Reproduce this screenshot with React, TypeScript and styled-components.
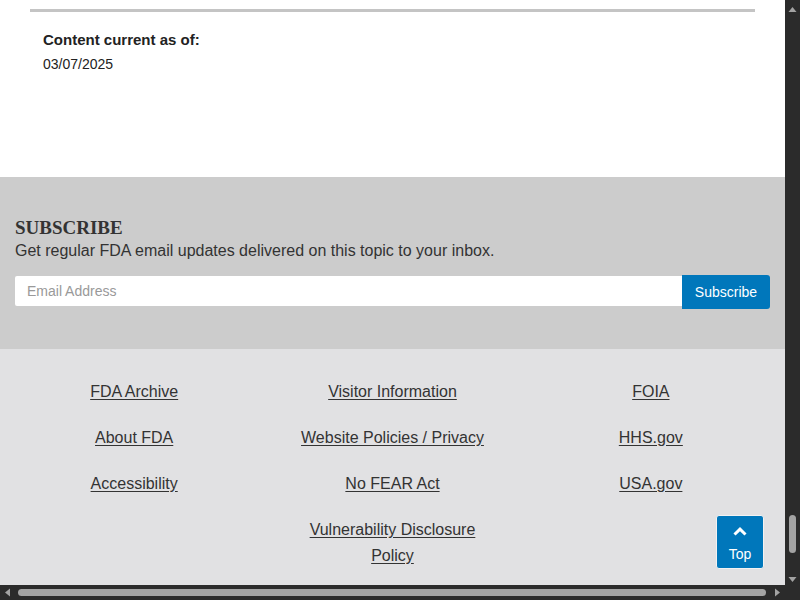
import React from "react";
import styled, { createGlobalStyle } from "styled-components";

const Global = createGlobalStyle`
  html, body { margin: 0; padding: 0; background: #ffffff; }
  body { font-family: "Liberation Sans", Arial, sans-serif; color: #333333; overflow: hidden; }
  * { box-sizing: border-box; }
`;

const Page = styled.div`
  width: 785px;
  height: 585px;
  overflow: hidden;
  display: flex;
  flex-direction: column;
`;

const Meta = styled.section`
  background: #ffffff;
  height: 177px;
  flex-shrink: 0;
  padding: 9px 30px 0 30px;
`;

const Rule = styled.div`
  height: 3px;
  background: #c4c4c4;
`;

const MetaBody = styled.div`
  padding: 18px 0 0 13px;
  display: flex;
  flex-direction: column;
  gap: 4px;
`;

const MetaLabel = styled.div`
  font-size: 15px;
  line-height: 20px;
  font-weight: 700;
  color: #222222;
`;

const MetaValue = styled.div`
  font-size: 14px;
  line-height: 20px;
  color: #222222;
`;

const Subscribe = styled.section`
  background: #cccccc;
  flex-shrink: 0;
  padding: 39px 15px 40px 15px;
`;

const SubTitle = styled.h2`
  margin: 0;
  font-family: "Liberation Serif", "Times New Roman", serif;
  font-weight: 700;
  font-size: 19px;
  line-height: 24px;
  color: #333333;
`;

const SubText = styled.p`
  margin: 0;
  font-size: 16px;
  line-height: 22px;
  color: #333333;
`;

const Form = styled.form`
  margin-top: 13px;
  display: flex;
  align-items: flex-start;
`;

const Email = styled.input`
  flex: 1;
  height: 30px;
  margin-top: 1px;
  border: none;
  border-radius: 2px 0 0 2px;
  background: #ffffff;
  padding: 0 12px;
  font-family: "Liberation Sans", Arial, sans-serif;
  font-size: 14px;
  color: #333;
  outline: none;
  &::placeholder { color: #999999; }
`;

const SubButton = styled.button`
  width: 88px;
  height: 34px;
  border: none;
  border-radius: 0 3px 3px 0;
  background: #0077bb;
  color: #ffffff;
  font-family: "Liberation Sans", Arial, sans-serif;
  font-size: 14px;
  padding: 0;
  cursor: pointer;
`;

const Footer = styled.footer`
  flex: 1;
  background: #e1e1e3;
  padding: 30px 5px 0 5px;
  display: grid;
  grid-template-columns: repeat(3, 1fr);
  row-gap: 20px;
  align-content: start;
`;

const Cell = styled.div`
  display: flex;
  justify-content: center;
  text-align: center;
`;

const FootLink = styled.a`
  display: block;
  max-width: 200px;
  font-size: 16px;
  line-height: 26px;
  color: #333333;
  text-decoration: underline;
  text-underline-offset: 2px;
`;

const TopButton = styled.a`
  position: fixed;
  left: 716px;
  top: 515px;
  width: 48px;
  height: 54px;
  background: #0077bb;
  border: 1px solid #f2f2f2;
  border-radius: 3px;
  color: #ffffff;
  display: flex;
  flex-direction: column;
  align-items: center;
  padding-top: 11px;
  gap: 10px;
  text-decoration: none;
  font-size: 14px;
  line-height: 16px;
`;

const VScroll = styled.div`
  position: fixed;
  left: 785px;
  top: 0;
  width: 15px;
  height: 600px;
  background: #2b2b2b;
`;

const HScroll = styled.div`
  position: fixed;
  left: 0;
  top: 585px;
  width: 785px;
  height: 15px;
  background: #2b2b2b;
`;

const Thumb = styled.div<{ $x: number; $y: number; $w: number; $h: number }>`
  position: absolute;
  left: ${(p) => p.$x}px;
  top: ${(p) => p.$y}px;
  width: ${(p) => p.$w}px;
  height: ${(p) => p.$h}px;
  background: #a3a3a3;
  border-radius: 4px;
`;

const Arrow = styled.svg<{ $x: number; $y: number }>`
  position: absolute;
  left: ${(p) => p.$x}px;
  top: ${(p) => p.$y}px;
  width: 15px;
  height: 15px;
`;

const links: string[][] = [
  ["FDA Archive", "Visitor Information", "FOIA"],
  ["About FDA", "Website Policies / Privacy", "HHS.gov"],
  ["Accessibility", "No FEAR Act", "USA.gov"],
  ["", "Vulnerability Disclosure Policy", ""],
];

export default function App() {
  return (
    <>
      <Global />
      <Page>
        <Meta>
          <Rule />
          <MetaBody>
            <MetaLabel>Content current as of:</MetaLabel>
            <MetaValue>03/07/2025</MetaValue>
          </MetaBody>
        </Meta>
        <Subscribe>
          <SubTitle>SUBSCRIBE</SubTitle>
          <SubText>Get regular FDA email updates delivered on this topic to your inbox.</SubText>
          <Form onSubmit={(e) => e.preventDefault()}>
            <Email type="email" placeholder="Email Address" />
            <SubButton type="submit">Subscribe</SubButton>
          </Form>
        </Subscribe>
        <Footer>
          {links.flat().map((t, i) => (
            <Cell key={i}>{t && <FootLink href="#">{t}</FootLink>}</Cell>
          ))}
        </Footer>
      </Page>
      <TopButton href="#">
        <svg width="14" height="9" viewBox="0 0 14 9">
          <path d="M1.5 7.5 L7 2.2 L12.5 7.5" fill="none" stroke="#ffffff" strokeWidth="3" />
        </svg>
        <span>Top</span>
      </TopButton>
      <VScroll>
        <Arrow $x={0} $y={2} viewBox="0 0 15 15">
          <path d="M3.5 10 L7.5 5 L11.5 10 Z" fill="#a3a3a3" />
        </Arrow>
        <Thumb $x={4} $y={515} $w={7} $h={38} />
        <Arrow $x={0} $y={572} viewBox="0 0 15 15">
          <path d="M3.5 5 L7.5 10 L11.5 5 Z" fill="#a3a3a3" />
        </Arrow>
      </VScroll>
      <HScroll>
        <Arrow $x={0} $y={0} viewBox="0 0 15 15">
          <path d="M10 3.5 L5 7.5 L10 11.5 Z" fill="#a3a3a3" />
        </Arrow>
        <Thumb $x={18} $y={4} $w={748} $h={7} />
        <Arrow $x={770} $y={0} viewBox="0 0 15 15">
          <path d="M5 3.5 L10 7.5 L5 11.5 Z" fill="#a3a3a3" />
        </Arrow>
      </HScroll>
    </>
  );
}
